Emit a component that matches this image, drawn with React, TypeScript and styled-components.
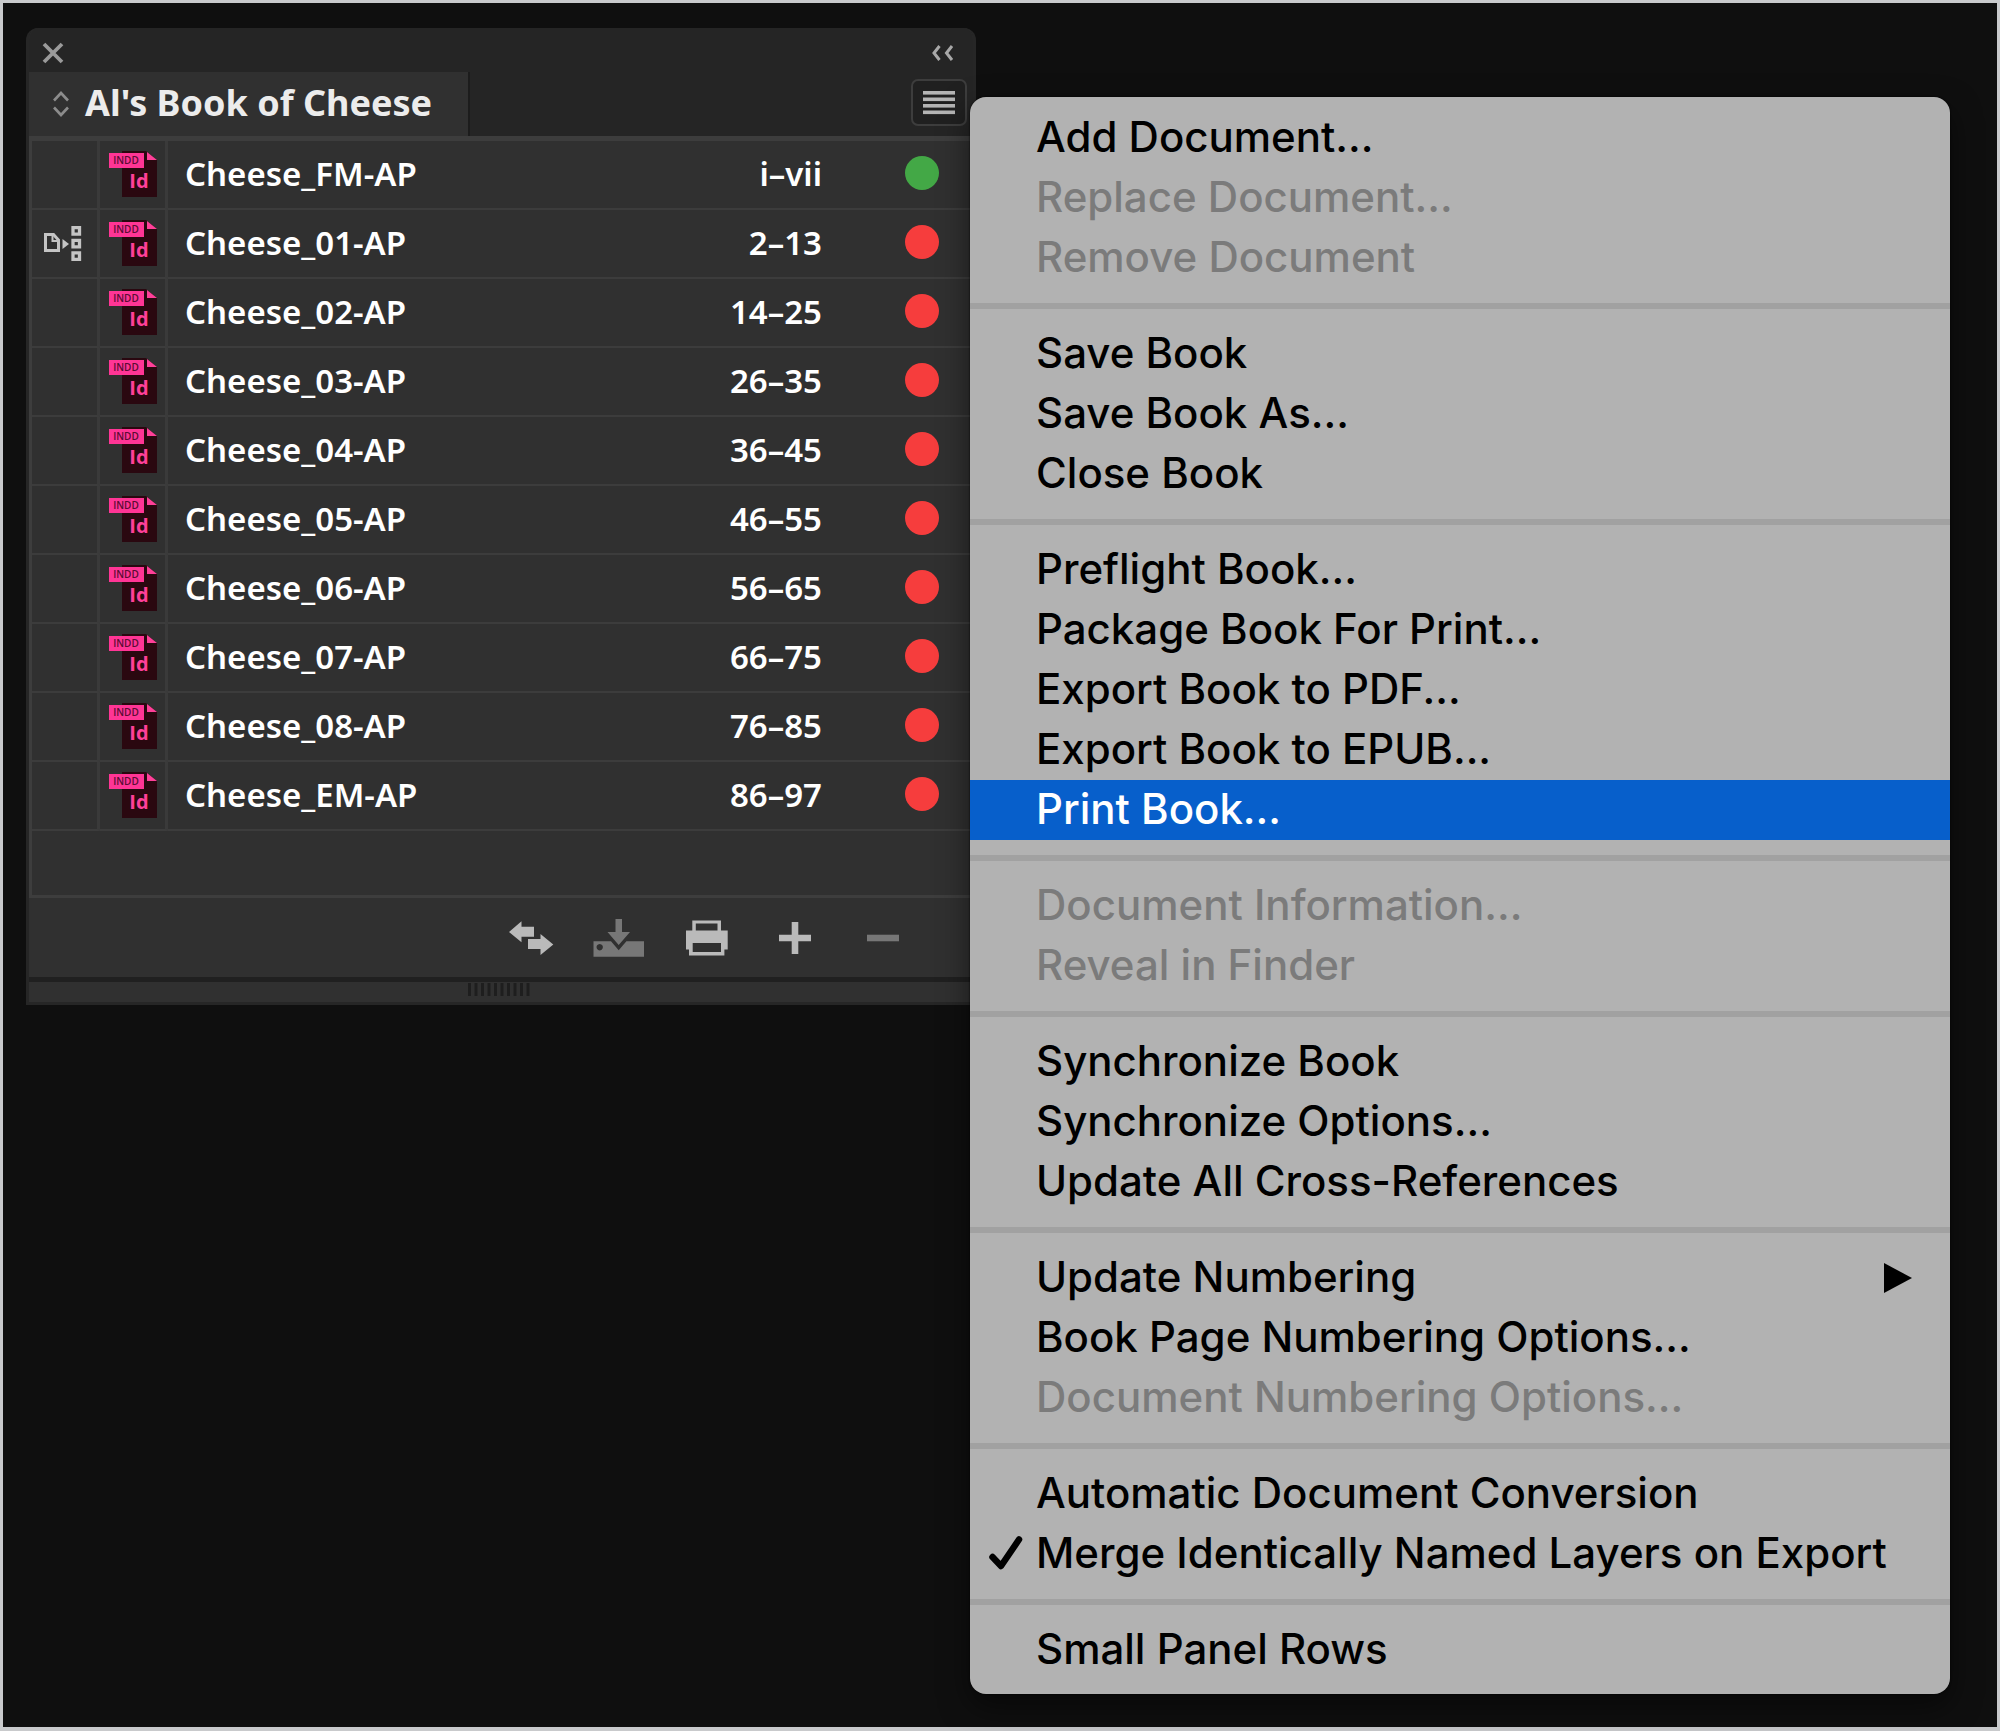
import React from "react";
import styled, { createGlobalStyle } from "styled-components";

const GlobalStyle = createGlobalStyle`
  *, *::before, *::after { box-sizing: border-box; }
  body { margin: 0; background: #0f0f0f; }
  button { font: inherit; color: inherit; background: none; border: 0; margin: 0; padding: 0; cursor: pointer; }
  svg { display: block; }
`;

const panelFont = `"Noto Sans", "Open Sans", sans-serif`;
const menuFont = `Inter, "Liberation Sans", sans-serif`;

const Desktop = styled.main`
  display: flex;
  align-items: flex-start;
  min-height: 100vh;
  padding: 25px 47px 33px 23px;
  border: 3px solid #c9cacc;
  border-bottom-width: 4px;
  background: #0f0f0f;
`;

/* ---------- Book panel ---------- */

const Panel = styled.section`
  flex: 0 0 950px;
  border: solid #262626;
  border-width: 0 3px 3px;
  border-radius: 12px 12px 0 0;
  background: #303030;
  color: #fff;
  font-family: ${panelFont};
  overflow: hidden;
`;

const TitleBar = styled.header`
  display: flex;
  align-items: center;
  justify-content: space-between;
  height: 44px;
  padding: 6px 19px 0 13px;
  background: #252525;
  color: #9a9a9a;
`;

const TabBar = styled.div`
  display: flex;
  align-items: flex-start;
  justify-content: space-between;
  height: 64px;
  padding-right: 6px;
  background: #252525;
`;

const Tab = styled.h1`
  display: flex;
  align-items: center;
  gap: 16px;
  height: 64px;
  margin: 0;
  padding: 0 36px 0 24px;
  border-right: 2px solid #1c1c1c;
  background: #303030;
  color: #ececec;
  font-size: 36px;
  font-weight: 700;
  line-height: 64px;
  white-space: nowrap;

  svg { color: #8c8c8c; }
`;

const TabTitle = styled.span`
  padding-bottom: 2px;
`;

const MenuToggle = styled.button`
  display: flex;
  align-items: center;
  justify-content: center;
  width: 56px;
  height: 47px;
  margin-top: 7px;
  border: 2px solid #3d3d3d;
  border-radius: 7px;
  background: #202020;
`;

const ListArea = styled.div`
  padding-bottom: 64px;
  border: solid #3d3d3d;
  border-width: 5px 0 3px 3px;
`;

const DocTable = styled.table`
  width: 100%;
  border-collapse: separate;
  border-spacing: 0;
  table-layout: fixed;
  font-size: 33px;
  font-weight: 600;
  line-height: 40px;

  td, th {
    height: 69px;
    border-bottom: 2px solid #3c3c3c;
  }
`;

const IconCell = styled.td`
  padding: 0 0 0 ${(p: { $inset: number }) => p.$inset}px;
  border-right: 3px solid #3a3a3a;
`;

const NameCell = styled.th`
  padding: 0 0 2px 17px;
  font-weight: inherit;
  text-align: left;
`;

const PagesCell = styled.td`
  padding: 0 0 2px;
  text-align: right;
`;

const StatusCell = styled.td`
  padding: 0 34px 4px 0;
`;

const StatusDot = styled.span`
  display: block;
  width: 34px;
  height: 34px;
  margin-left: auto;
  border-radius: 50%;
  background: ${(p: { $ok: boolean }) => (p.$ok ? "#43a846" : "#f63d3d")};
`;

const Toolbar = styled.footer`
  display: flex;
  align-items: center;
  justify-content: flex-end;
  gap: 32px;
  height: 79px;
  padding-right: 62px;
`;

const ToolButton = styled.button`
  display: flex;
  align-items: center;
  justify-content: center;
  width: 56px;
  height: 56px;
  color: #bababa;

  &:disabled { color: #777; }
`;

const Grip = styled.div`
  display: flex;
  justify-content: center;
  height: 25px;
  border-top: 5px solid #202020;
  padding: 1px 4px 0 0;
`;

/* ---------- Panel menu ---------- */

const Menu = styled.nav`
  position: relative;
  flex: 1;
  margin: 69px 0 0 -6px;
  padding: 11px 0 14px;
  border-radius: 16px;
  background: #b2b2b2;
  box-shadow: 0 0 2px #000, 0 12px 30px rgba(0, 0, 0, 0.5);
  font-family: ${menuFont};
  overflow: hidden;
`;

const Group = styled.div`
  & + &::before {
    content: "";
    display: block;
    height: 6px;
    margin: 15px 0;
    background: #a1a1a1;
  }
`;

const MenuItem = styled.button`
  display: grid;
  grid-template-columns: 49px 1fr 28px;
  align-items: center;
  width: 100%;
  height: 60px;
  padding: 0 38px 0 17px;
  background: ${(p: { $active?: boolean }) => (p.$active ? "#075fcb" : "transparent")};
  color: ${(p: { $active?: boolean }) => (p.$active ? "#fff" : "#000")};
  font-size: 42px;
  font-weight: 500;
  line-height: 56px;
  text-align: left;
  white-space: nowrap;

  &:disabled { color: #7b7b7b; }
`;

const Label = styled.span`
  grid-column: 2;
  padding-bottom: 2px;
`;

/* ---------- Icons ---------- */

const CloseIcon = () => (
  <svg width="22" height="22" viewBox="0 0 22 22" stroke="currentColor" strokeWidth="3.8">
    <path d="M2 2 20 20M20 2 2 20" />
  </svg>
);

const CollapseIcon = () => (
  <svg width="24" height="18" viewBox="0 0 24 18" fill="none" stroke="#a8a8a8" strokeWidth="3">
    <path d="M9.500 2 4 9l5.500 7M22 2 16.500 9l5.500 7" />
  </svg>
);

const SortIcon = () => (
  <svg width="16" height="28" viewBox="0 0 16 28" fill="none" stroke="currentColor" strokeWidth="2.6">
    <path d="M1 10.500 8 3l7 7.500M1 17.500 8 25l7-7.500" />
  </svg>
);

const LinesIcon = () => (
  <svg width="32" height="24" viewBox="0 0 32 24" fill="#b4b4b4">
    {[0, 6.5, 13, 19.5].map((y) => (
      <rect key={y} y={y} width="32" height="3.6" />
    ))}
  </svg>
);

const StyleSourceIcon = () => (
  <svg width="40" height="36" viewBox="0 0 40 36" fill="none" stroke="#c4c4c4" role="img" aria-label="Style source">
    <path d="M3.500 8.500h8l5 5.500v10.500h-13z" strokeWidth="3" />
    <path d="M10.500 8v7h6" strokeWidth="2" />
    <path d="M20.500 13v10l6.500-5z" fill="#c4c4c4" stroke="none" />
    <path d="M31 1.700h6.500v6.500H31zM31 14.300h6.500v6.500H31zM31 26.800h6.500v6.500H31z" strokeWidth="3.300" />
  </svg>
);

const InddIcon = () => (
  <svg width="50" height="50" viewBox="0 0 50 50" role="img" aria-label="InDesign document">
    <path d="M13 1h24l11 9v37H13z" fill="#2a0810" />
    <path d="M38 2v8h10z" fill="#ff4099" />
    <rect y="3" width="35" height="15" fill="#ff3595" />
    <text x="17" y="14" textAnchor="middle" fontFamily="Open Sans, sans-serif" fontSize="10" fontWeight="600" fill="#5a0c33">
      INDD
    </text>
    <text x="30" y="38" textAnchor="middle" fontFamily="Open Sans, sans-serif" fontSize="20" fontWeight="700" fill="#ff4099">
      Id
    </text>
  </svg>
);

const SyncIcon = () => (
  <svg width="46" height="36" viewBox="0 0 46 36" fill="currentColor">
    <path d="M1 12 13.500 1.300v5.400H26v10H13.500v5.600z" />
    <path d="M20 19h12.500v-5L45.300 24.500 32.500 35v-6H20z" />
  </svg>
);

const SaveIcon = () => (
  <svg width="52" height="40" viewBox="0 0 52 40" fill="currentColor">
    <path d="M22.500 1h6.500v13h8L25.700 27 14.500 14h8z" />
    <path
      fillRule="evenodd"
      d="M.500 23.300h17.500l7.700 9 7.700-9h17.600v15.500H.500zM6.700 26a3.200 3.200 0 1 0 .010 0z"
    />
  </svg>
);

const PrintIcon = () => (
  <svg width="42" height="36" viewBox="0 0 42 36" fill="currentColor">
    <path
      fillRule="evenodd"
      d="M6.300.500h28.700v10h6.700v19h-3.300v6H3v-6H0v-19h6.300zM9.800 3.500v7h21.700v-7zM6.700 23v9h28.300v-9z"
    />
  </svg>
);

const PlusIcon = () => (
  <svg width="32" height="32" viewBox="0 0 32 32" fill="currentColor">
    <path d="M12.700 0h6.600v12.700H32v6.600H19.300V32h-6.600V19.300H0v-6.600h12.700z" />
  </svg>
);

const MinusIcon = () => (
  <svg width="32" height="32" viewBox="0 0 32 32" fill="currentColor">
    <path d="M0 12.700h32v6.600H0z" />
  </svg>
);

const GripIcon = () => (
  <svg width="62" height="13" viewBox="0 0 62 13" fill="#1e1e1e">
    {Array.from({ length: 10 }, (_, i) => (
      <rect key={i} x={i * 6.5} width="3" height="13" />
    ))}
  </svg>
);

const CheckIcon = () => (
  <svg width="38" height="38" viewBox="0 0 38 38" fill="none" stroke="currentColor" strokeLinecap="round" strokeLinejoin="round">
    <path d="M5.500 22 14 31 32 4.500" strokeWidth="6.500" />
  </svg>
);

const SubmenuIcon = () => (
  <svg width="28" height="30" viewBox="0 0 28 30" fill="currentColor">
    <path d="M0 0v30l28-15z" />
  </svg>
);

/* ---------- Data ---------- */

const documents = [
  { name: "Cheese_FM-AP", pages: "i–vii", ok: true },
  { name: "Cheese_01-AP", pages: "2–13", source: true },
  { name: "Cheese_02-AP", pages: "14–25" },
  { name: "Cheese_03-AP", pages: "26–35" },
  { name: "Cheese_04-AP", pages: "36–45" },
  { name: "Cheese_05-AP", pages: "46–55" },
  { name: "Cheese_06-AP", pages: "56–65" },
  { name: "Cheese_07-AP", pages: "66–75" },
  { name: "Cheese_08-AP", pages: "76–85" },
  { name: "Cheese_EM-AP", pages: "86–97" },
];

type Item = { label: string; disabled?: boolean; active?: boolean; checked?: boolean; submenu?: boolean };

const menuGroups: Item[][] = [
  [
    { label: "Add Document..." },
    { label: "Replace Document...", disabled: true },
    { label: "Remove Document", disabled: true },
  ],
  [{ label: "Save Book" }, { label: "Save Book As..." }, { label: "Close Book" }],
  [
    { label: "Preflight Book..." },
    { label: "Package Book For Print..." },
    { label: "Export Book to PDF..." },
    { label: "Export Book to EPUB..." },
    { label: "Print Book...", active: true },
  ],
  [
    { label: "Document Information...", disabled: true },
    { label: "Reveal in Finder", disabled: true },
  ],
  [{ label: "Synchronize Book" }, { label: "Synchronize Options..." }, { label: "Update All Cross-References" }],
  [
    { label: "Update Numbering", submenu: true },
    { label: "Book Page Numbering Options..." },
    { label: "Document Numbering Options...", disabled: true },
  ],
  [{ label: "Automatic Document Conversion" }, { label: "Merge Identically Named Layers on Export", checked: true }],
  [{ label: "Small Panel Rows" }],
];

const MarkColumn = styled.col`
  width: 68px;
`;

const PagesColumn = styled.col`
  width: 200px;
`;

const StatusColumn = styled.col`
  width: 151px;
`;

function BookPanel() {
  return (
    <Panel>
      <TitleBar>
        <button aria-label="Close">
          <CloseIcon />
        </button>
        <button aria-label="Collapse panel">
          <CollapseIcon />
        </button>
      </TitleBar>
      <TabBar>
        <Tab>
          <SortIcon />
          <TabTitle>Al's Book of Cheese</TabTitle>
        </Tab>
        <MenuToggle aria-label="Panel menu" aria-expanded="true">
          <LinesIcon />
        </MenuToggle>
      </TabBar>
      <ListArea>
        <DocTable aria-label="Book documents">
          <colgroup>
            <MarkColumn />
            <MarkColumn />
            <col />
            <PagesColumn />
            <StatusColumn />
          </colgroup>
          <tbody>
            {documents.map((doc) => (
              <tr key={doc.name}>
                <IconCell $inset={10}>{doc.source && <StyleSourceIcon />}</IconCell>
                <IconCell $inset={9}>
                  <InddIcon />
                </IconCell>
                <NameCell scope="row">{doc.name}</NameCell>
                <PagesCell>{doc.pages}</PagesCell>
                <StatusCell>
                  <StatusDot $ok={!!doc.ok} />
                </StatusCell>
              </tr>
            ))}
          </tbody>
        </DocTable>
      </ListArea>
      <Toolbar>
        <ToolButton aria-label="Synchronize">
          <SyncIcon />
        </ToolButton>
        <ToolButton aria-label="Save book" disabled>
          <SaveIcon />
        </ToolButton>
        <ToolButton aria-label="Print book">
          <PrintIcon />
        </ToolButton>
        <ToolButton aria-label="Add documents">
          <PlusIcon />
        </ToolButton>
        <ToolButton aria-label="Remove documents" disabled>
          <MinusIcon />
        </ToolButton>
      </Toolbar>
      <Grip>
        <GripIcon />
      </Grip>
    </Panel>
  );
}

function PanelMenu() {
  return (
    <Menu role="menu" aria-label="Book panel menu">
      {menuGroups.map((items) => (
        <Group key={items[0].label} role="group">
          {items.map((item) => (
            <MenuItem
              key={item.label}
              role={item.checked ? "menuitemcheckbox" : "menuitem"}
              aria-checked={item.checked}
              aria-haspopup={item.submenu ? "menu" : undefined}
              disabled={item.disabled}
              $active={item.active}
            >
              {item.checked && <CheckIcon />}
              <Label>{item.label}</Label>
              {item.submenu && <SubmenuIcon />}
            </MenuItem>
          ))}
        </Group>
      ))}
    </Menu>
  );
}

export default function App() {
  return (
    <>
      <GlobalStyle />
      <Desktop>
        <BookPanel />
        <PanelMenu />
      </Desktop>
    </>
  );
}
